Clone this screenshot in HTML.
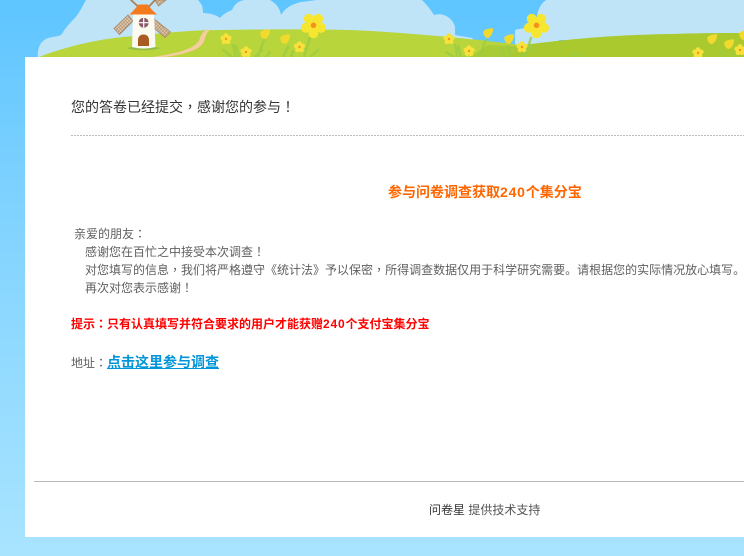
<!DOCTYPE html>
<html><head><meta charset="utf-8">
<style>
html,body{margin:0;padding:0;width:744px;height:556px;overflow:hidden}
body{position:relative;background:linear-gradient(#5ec5ff 0,#7fd2ff 200px,#a9e4ff 556px);font-family:"Liberation Sans","WenQuanYi Zen Hei","Noto Sans CJK SC",sans-serif;color:#5f5f5f;font-size:12px}
svg{position:absolute;left:0;top:0}
#box{position:absolute;left:25px;top:57px;width:719px;height:480px;background:#fff}
.t{position:absolute;white-space:nowrap;line-height:18px}
a{color:#0095d9;text-decoration:underline}
i{font-style:normal;font-family:"Noto Sans CJK TC",sans-serif}
.n{letter-spacing:.8px}
</style></head><body>
<svg width="744" height="57" viewBox="0 0 744 57">
<defs>
<pattern id="m" width="2.4" height="2.4" patternUnits="userSpaceOnUse" patternTransform="rotate(45)"><rect width="2.4" height="2.4" fill="#dccbb4"/><path d="M0 0H2.4M0 0V2.4" stroke="#a9825e" stroke-width="1" fill="none"/></pattern>
<g id="f"><g fill="#f7e62f"><circle cx="0" cy="-8" r="5" transform="rotate(36)"/><circle cx="0" cy="-8" r="5" transform="rotate(108)"/><circle cx="0" cy="-8" r="5" transform="rotate(180)"/><circle cx="0" cy="-8" r="5" transform="rotate(252)"/><circle cx="0" cy="-8" r="5" transform="rotate(324)"/><circle r="5"/></g><circle r="2.8" fill="#f5921e"/></g>
<g id="s"><g fill="#f6e23a"><circle cx="0" cy="-3.400" r="2.400" transform="rotate(0)"/><circle cx="0" cy="-3.400" r="2.400" transform="rotate(72)"/><circle cx="0" cy="-3.400" r="2.400" transform="rotate(144)"/><circle cx="0" cy="-3.400" r="2.400" transform="rotate(216)"/><circle cx="0" cy="-3.400" r="2.400" transform="rotate(288)"/><circle r="2"/></g><circle r="1.200" fill="#f0941e"/></g>
<path id="u" d="M-4.500 -2C-2 -4.500 3 -5 5 -4.500C5.500 -1 3 4 0 5C-3 5 -5.500 1 -4.500 -2Z" fill="#f2d92e"/>
</defs>
<path fill="#bfe4f8" d="M38 57C37 46 42 38 53 37C58 36 60 36 62 34C66 26 72 22 78 14C82 8 84 3 86 0H198C203 5 203 9 203 13C210 13 216 15 220 18C224 13 230 11 232 10C235 3 240 0 246 0H270C277 4 280 9 281 15C285 8 292 4 301 2L317 0H422C427 5 431 10 434 15C443 12 453 18 455 27V35L472 38L490 57Z"/>
<path fill="#bfe4f8" d="M515 45V30C522 28 530 28 537 25C536 15 538 6 546 0H744V40H560L530 52Z"/>
<path fill="#a9c92e" d="M490 50C540 42 600 35 672 34C700 33 725 33 744 33V57H480Z"/>
<path fill="#b8d53c" d="M39 57C65 47 100 38 135 36C165 33 190 30 220 30C280 29 340 29 372 31C420 34 490 40 533 47C515 51 500 54 488 57Z"/>
<path fill="#a9cb36" d="M470 57L488 45L533 47L520 51L505 57Z"/>
<path fill="#f6cda2" d="M207 29.500C204 31 201 34 200 38C199 43 193 47 185 50C177 53 165 55 153 57H165C177 55.500 187 53 194 50C201 47 204 43 205 38C206 34 208 31 211 29.500Z"/>
<g fill="none" stroke="#9ccc42" stroke-width="2.400" stroke-linecap="round" opacity=".8">
<path d="M235 57C235 52 234 48 233 45M239 57L236 46M232 57L223 50M242 57L248 50"/>
<path d="M255 57L262 50M258 57C260 50 262 45 264 40M266 57L270 52"/>
<path d="M283 57C285 52 287 50 288 47M291 57L293 51M304 57C306 50 308 44 310 38M310 57L318 50"/>
<path d="M457 57C457 52 456 48 455 45M461 57L458 46M454 57L446 52M464 57L470 50"/>
<path d="M478 57L484 50M480 57C482 50 484 44 486 40M510 57C511 53 510 50 508 46M505 57L501 50M520 57L530 48M526 57C527 50 529 44 531 38M533 45L525 50"/>
<path d="M574 57L572 54M578 57L580 52M576 57L575 52"/>
<path d="M725 57L722 50M736 57L732 52"/>
</g>
<g fill="url(#m)" stroke="#a9825e" stroke-width=".8">
<path d="M114 28.500L119.500 34.500L133 21L128 15Z"/>
<path d="M153 18L150 24.500L165 37.500L170.500 32Z"/>
<path d="M155 0L158.500 6L166 0Z"/>
</g>
<path stroke="#a9825e" stroke-width="1.800" d="M130 -1L138 6.500M156 -1L149 6.500" fill="none"/>
<path fill="#8fb44a" opacity=".8" d="M127 48C134 46 152 46 160 48C154 51 133 51 127 48Z"/>
<path fill="#fbfaf0" d="M133 14H154L155.500 47C148 49 139 49 132 47Z"/>
<path fill="#f47a1e" d="M129.500 14.500C133 11 136 8 138.500 4.500H148C150 8 153 11 157 14.500Z"/>
<circle cx="143.700" cy="22.700" r="5" fill="#8d5a6a"/><path stroke="#fff" stroke-width="1.200" d="M143.700 17.700V27.700M138.700 22.700H148.700"/>
<path fill="#a85a20" d="M138 46V40C138 36 141 34.500 143.500 34.500C146 34.500 149 36 149 40V46Z"/>
<use href="#s" x="226" y="39"/><use href="#s" x="246" y="52"/><use href="#s" x="299.500" y="47"/>
<use href="#s" x="449" y="39"/><use href="#s" x="469" y="51"/><use href="#s" x="522" y="47"/>
<use href="#s" x="698" y="53"/><use href="#s" x="740" y="50"/>
<use href="#u" x="265" y="34"/><use href="#u" x="285" y="39"/><use href="#u" x="488" y="33"/><use href="#u" x="509" y="39"/><use href="#u" x="712" y="39"/><use href="#u" x="729" y="44"/><use href="#u" x="744" y="35"/>
<use href="#f" x="313.500" y="25.300"/><use href="#f" x="536.500" y="25.300"/>
</svg>
<div id="box"></div>
<div class="t" style="left:71px;top:98px;font-size:14px;color:#333">您的答卷已经提交<i>，</i>感谢您的参与<i>！</i></div>
<div style="position:absolute;left:71px;top:135px;width:673px;height:1px;background:repeating-linear-gradient(90deg,#bbb 0,#bbb 2px,transparent 2px,transparent 3px)"></div>
<div class="t" style="left:388px;top:183px;font-size:14px;font-weight:bold;color:#ff6600">参与问卷调查获取<span class="n">240</span>个集分宝</div>
<div class="t" style="left:74px;top:225px">亲爱的朋友<i>：</i></div>
<div class="t" style="left:85px;top:243px">感谢您在百忙之中接受本次调查<i>！</i></div>
<div class="t" style="left:85px;top:261px">对您填写的信息<i>，</i>我们将严格遵守《统计法》予以保密<i>，</i>所得调查数据仅用于科学研究需要。请根据您的实际情况放心填写。</div>
<div class="t" style="left:85px;top:279px">再次对您表示感谢<i>！</i></div>
<div class="t" style="left:71px;top:315px;font-weight:bold;color:#f00">提示<i>：</i>只有认真填写并符合要求的用户才能获赠<span class="n">240</span>个支付宝集分宝</div>
<div class="t" style="left:71px;top:353px">地址<i>：</i><a style="font-size:14px;font-weight:bold" href="#">点击这里参与调查</a></div>
<div style="position:absolute;left:34px;top:481px;width:710px;height:1px;background:#b8b8b8"></div>
<div class="t" style="left:429px;top:501px;color:#555"><span style="color:#333">问卷星</span> 提供技术支持</div>
</body></html>
